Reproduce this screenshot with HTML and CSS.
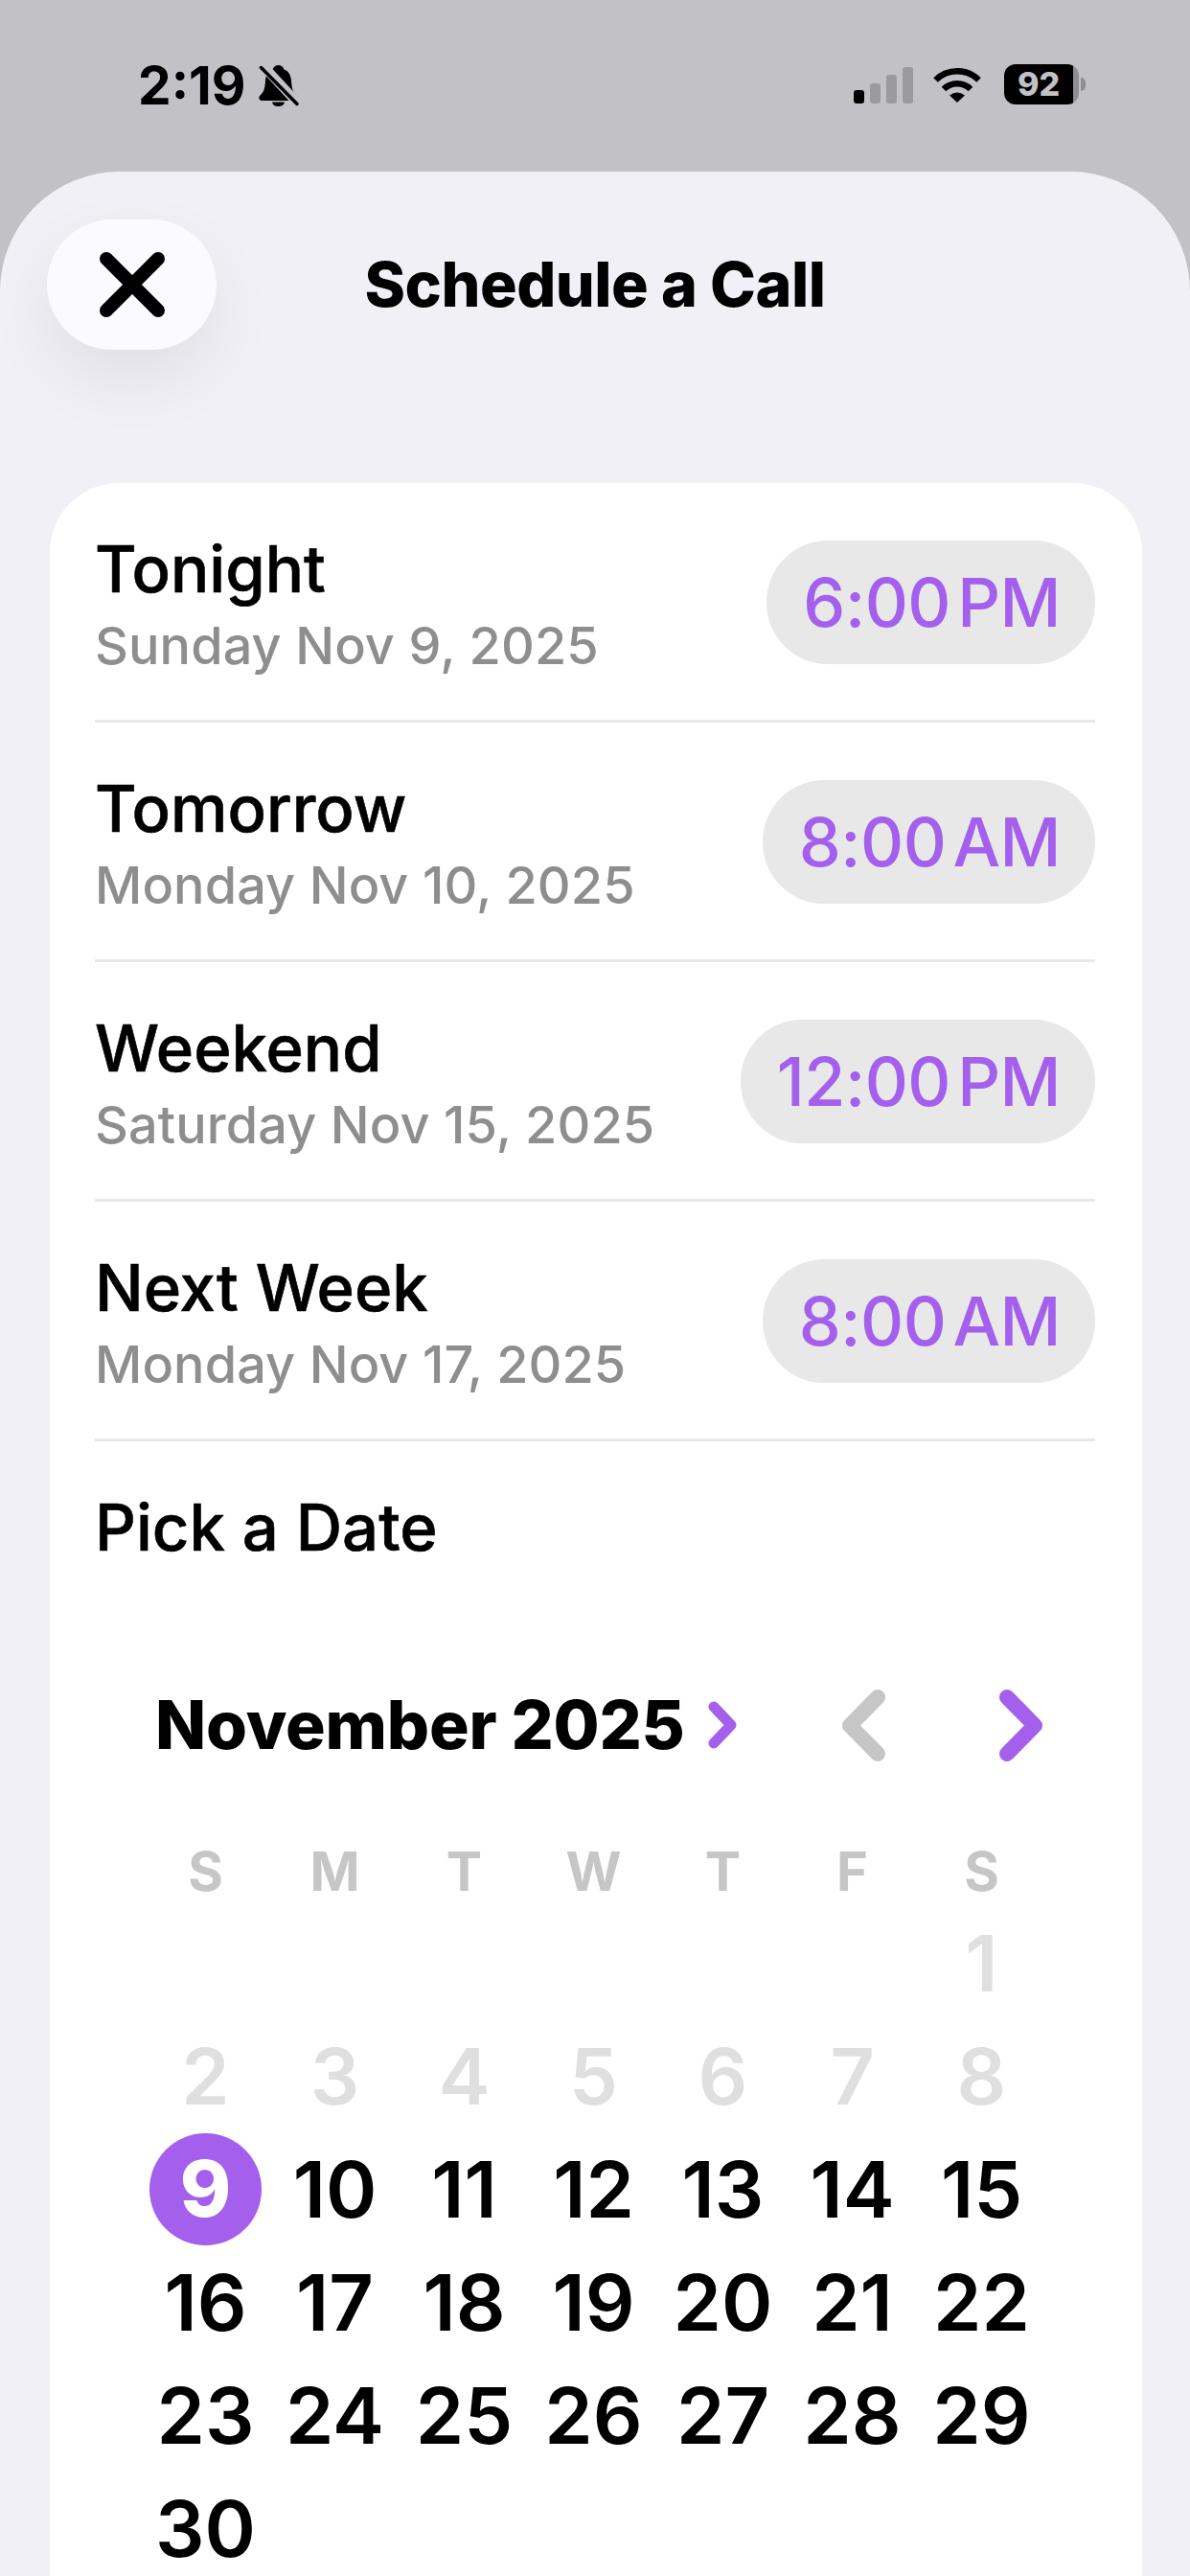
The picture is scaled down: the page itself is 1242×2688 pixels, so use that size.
FILE: index.html
```html
<!DOCTYPE html>
<html lang="en">
<head>
  <meta charset="UTF-8" />
  <title>Schedule a Call</title>
  <link rel="stylesheet" href="styles.css">
</head>
<body>

  <!-- Status bar -->
  <div class="status-bar">
    <div class="status-left">
      <span class="clock">2:19</span>
      <svg class="bell" viewBox="0 0 42 44" width="42" height="44">
        <path d="M20.500 1C17.500 1 15.500 3 14.500 5.500C9.500 7.500 7.500 11.500 7 17C6.500 24 6 28 2.500 31.500C0.500 33.500 0 34.500 0.500 36C1 37.500 2.500 38 4 38H37C38.500 38 40 37.500 40.500 36C41 34.500 40.500 33.500 38.500 31.500C35 28 34.500 24 34 17C33.500 11.500 31.500 7.500 26.500 5.500C25.500 3 23.500 1 20.500 1Z" fill="#000"/>
        <path d="M14 39.500H27C26.500 42.500 24 44 20.500 44C17 44 14.500 42.500 14 39.500Z" fill="#000"/>
        <path d="M3 0L42 42" stroke="#c2c1c6" stroke-width="10"/>
        <path d="M2.500 3.500L40 41.500" stroke="#000" stroke-width="3.500" stroke-linecap="round"/>
      </svg>
    </div>
    <div class="status-right">
      <div class="signal">
        <span class="bar bar-1"></span>
        <span class="bar bar-2"></span>
        <span class="bar bar-3"></span>
        <span class="bar bar-4"></span>
      </div>
      <svg class="wifi" viewBox="0 0 52 38" width="52" height="38">
        <path d="M3.500 14.500A32 32 0 0 1 48.500 14.500" fill="none" stroke="#000" stroke-width="6.500"/>
        <path d="M12 24A20 20 0 0 1 40 24" fill="none" stroke="#000" stroke-width="6.500"/>
        <path d="M26 38L18 30.500Q26 24.500 34 30.500Z" fill="#000"/>
      </svg>
      <div class="battery">
        <div class="battery-body">92</div>
        <div class="battery-nub"></div>
      </div>
    </div>
  </div>

  <!-- Sheet -->
  <div class="sheet">
    <div class="sheet-head">
      <div class="close-btn">
        <svg viewBox="0 0 68 68" width="68" height="68">
          <path d="M7 7L61 61M61 7L7 61" stroke="#000" stroke-width="14" stroke-linecap="round"/>
        </svg>
      </div>
      <div class="sheet-title">Schedule a Call</div>
    </div>

    <div class="card">
      <div class="row">
        <div class="row-text">
          <div class="row-title">Tonight</div>
          <div class="row-date">Sunday Nov 9, 2025</div>
        </div>
        <div class="time-pill">6:00 PM</div>
      </div>
      <div class="row">
        <div class="row-text">
          <div class="row-title">Tomorrow</div>
          <div class="row-date">Monday Nov 10, 2025</div>
        </div>
        <div class="time-pill">8:00 AM</div>
      </div>
      <div class="row">
        <div class="row-text">
          <div class="row-title">Weekend</div>
          <div class="row-date">Saturday Nov 15, 2025</div>
        </div>
        <div class="time-pill">12:00 PM</div>
      </div>
      <div class="row">
        <div class="row-text">
          <div class="row-title">Next Week</div>
          <div class="row-date">Monday Nov 17, 2025</div>
        </div>
        <div class="time-pill">8:00 AM</div>
      </div>

      <div class="pick-row">Pick a Date</div>

      <!-- Calendar -->
      <div class="calendar">
        <div class="cal-head">
          <span class="cal-month">November 2025</span>
          <svg class="cal-more" viewBox="0 0 32 52" width="32" height="52">
            <path d="M7 7L25 26L7 45" fill="none" stroke="#a460ec" stroke-width="11" stroke-linecap="round" stroke-linejoin="round"/>
          </svg>
          <div class="cal-nav">
            <svg viewBox="0 0 49 75" width="49" height="75">
              <path d="M40 8L11 37.500L40 67" fill="none" stroke="#c6c6c6" stroke-width="16" stroke-linecap="round" stroke-linejoin="round"/>
            </svg>
            <svg viewBox="0 0 49 75" width="49" height="75">
              <path d="M9 8L38 37.500L9 67" fill="none" stroke="#a460ec" stroke-width="16" stroke-linecap="round" stroke-linejoin="round"/>
            </svg>
          </div>
        </div>

        <div class="cal-grid cal-weekdays">
          <span>S</span><span>M</span><span>T</span><span>W</span><span>T</span><span>F</span><span>S</span>
        </div>

        <div class="cal-grid cal-days">
          <span></span><span></span><span></span><span></span><span></span><span></span><span class="past">1</span>
          <span class="past">2</span><span class="past">3</span><span class="past">4</span><span class="past">5</span><span class="past">6</span><span class="past">7</span><span class="past">8</span>
          <span><b class="today">9</b></span><span>10</span><span>11</span><span>12</span><span>13</span><span>14</span><span>15</span>
          <span>16</span><span>17</span><span>18</span><span>19</span><span>20</span><span>21</span><span>22</span>
          <span>23</span><span>24</span><span>25</span><span>26</span><span>27</span><span>28</span><span>29</span>
          <span>30</span>
        </div>
      </div>
    </div>
  </div>

</body>
</html>
```

FILE: styles.css
```css
* {
  box-sizing: border-box;
}

body {
  margin: 0;
  height: 2688px;
  overflow: hidden;
  background: #c2c1c6;
  font-family: 'Inter', 'Liberation Sans', sans-serif;
  color: #000;
}

.status-bar {
  height: 179px;
  display: flex;
  justify-content: space-between;
  align-items: flex-start;
  padding: 67px 109px 0 144px;
}

.status-left {
  display: flex;
  align-items: center;
  gap: 14px;
}

.clock {
  font-size: 55px;
  line-height: 44px;
  font-weight: 700;
}

.bell {
  display: block;
}

.status-right {
  display: flex;
  align-items: center;
  gap: 23px;
}

.signal {
  display: flex;
  align-items: flex-end;
  gap: 6px;
  height: 40px;
  margin-right: -3px;
}

.bar {
  width: 11px;
  border-radius: 3px;
  background: #9b9a9e;
}

.bar-1 { height: 14px; background: #000; }
.bar-2 { height: 21px; }
.bar-3 { height: 30px; }
.bar-4 { height: 38px; }

.wifi {
  display: block;
}

.battery {
  display: flex;
  align-items: center;
  gap: 2px;
}

.battery-body {
  width: 78px;
  height: 42px;
  border-radius: 12px;
  background: linear-gradient(90deg, #000 92%, #8f8e93 92%);
  color: #c2c1c6;
  font-size: 34px;
  font-weight: 800;
  line-height: 42px;
  text-align: center;
  padding-right: 6px;
}

.battery-nub {
  width: 5px;
  height: 14px;
  border-radius: 0 7px 7px 0;
  background: #8f8e93;
}

.sheet {
  height: 2509px;
  overflow: hidden;
  background: #f1f0f6;
  border-radius: 125px 125px 0 0;
  padding-top: 50px;
}

.sheet-head {
  display: grid;
  grid-template-columns: 1fr auto 1fr;
  align-items: center;
  height: 275px;
  align-content: start;
}

.close-btn {
  width: 177px;
  height: 136px;
  margin-left: 49px;
  border-radius: 68px;
  background: #fbfaff;
  box-shadow: 0 30px 70px rgba(0, 0, 0, 0.07);
  display: flex;
  align-items: center;
  justify-content: center;
}

.close-btn svg {
  display: block;
}

.sheet-title {
  font-size: 64.500px;
  font-weight: 800;
  letter-spacing: -0.5px;
  grid-column: 2;
}

.card {
  margin: 0 50px 0 52px;
  padding: 0 49px 0 47px;
  height: 2300px;
  background: #fff;
  border-radius: 72px 72px 0 0;
}

.row {
  height: 250px;
  display: flex;
  align-items: center;
  justify-content: space-between;
  border-bottom: 3px solid #e8e8e8;
}

.row-title,
.pick-row {
  font-size: 67px;
  font-weight: 500;
  line-height: 80px;
  -webkit-text-stroke: 0.6px #000;
}

.row-date {
  font-size: 54px;
  font-weight: 500;
  line-height: 66px;
  margin-top: 7px;
  margin-bottom: -5px;
  letter-spacing: 0.1px;
  color: #8e8e8e;
}

.time-pill {
  height: 129px;
  margin-top: 1px;
  padding: 0 36px 0 38px;
  border-radius: 64px;
  background: #e8e8e8;
  color: #a460ec;
  font-size: 70px;
  font-weight: 500;
  line-height: 129px;
  word-spacing: -11px;
  letter-spacing: -0.5px;
}

.pick-row {
  height: 180px;
  display: flex;
  align-items: center;
}

.calendar {
  margin-left: 48px;
  width: 945px;
}

.cal-head {
  height: 232px;
  display: flex;
  align-items: center;
  padding-left: 15px;
}

.cal-month {
  font-size: 69.500px;
  font-weight: 800;
  letter-spacing: -0.2px;
}

.cal-more {
  margin-left: 23px;
  display: block;
}

.cal-nav {
  margin-left: auto;
  display: flex;
  gap: 117px;
  margin-right: 1px;
}

.cal-nav svg {
  display: block;
}

.cal-grid {
  display: grid;
  grid-template-columns: repeat(7, 135px);
  text-align: center;
}

.cal-weekdays {
  height: 74px;
  line-height: 74px;
  font-size: 56px;
  font-weight: 700;
  color: #c6c6c6;
}

.cal-days {
  grid-auto-rows: 118px;
  font-size: 81px;
  font-weight: 580;
  line-height: 118px;
}

.cal-days .past {
  color: #dfdfdf;
}

.today {
  display: block;
  width: 117px;
  height: 117px;
  margin: 0 auto;
  border-radius: 50%;
  background: #a460ec;
  color: #fff;
  font-weight: 800;
  line-height: 117px;
}
```
